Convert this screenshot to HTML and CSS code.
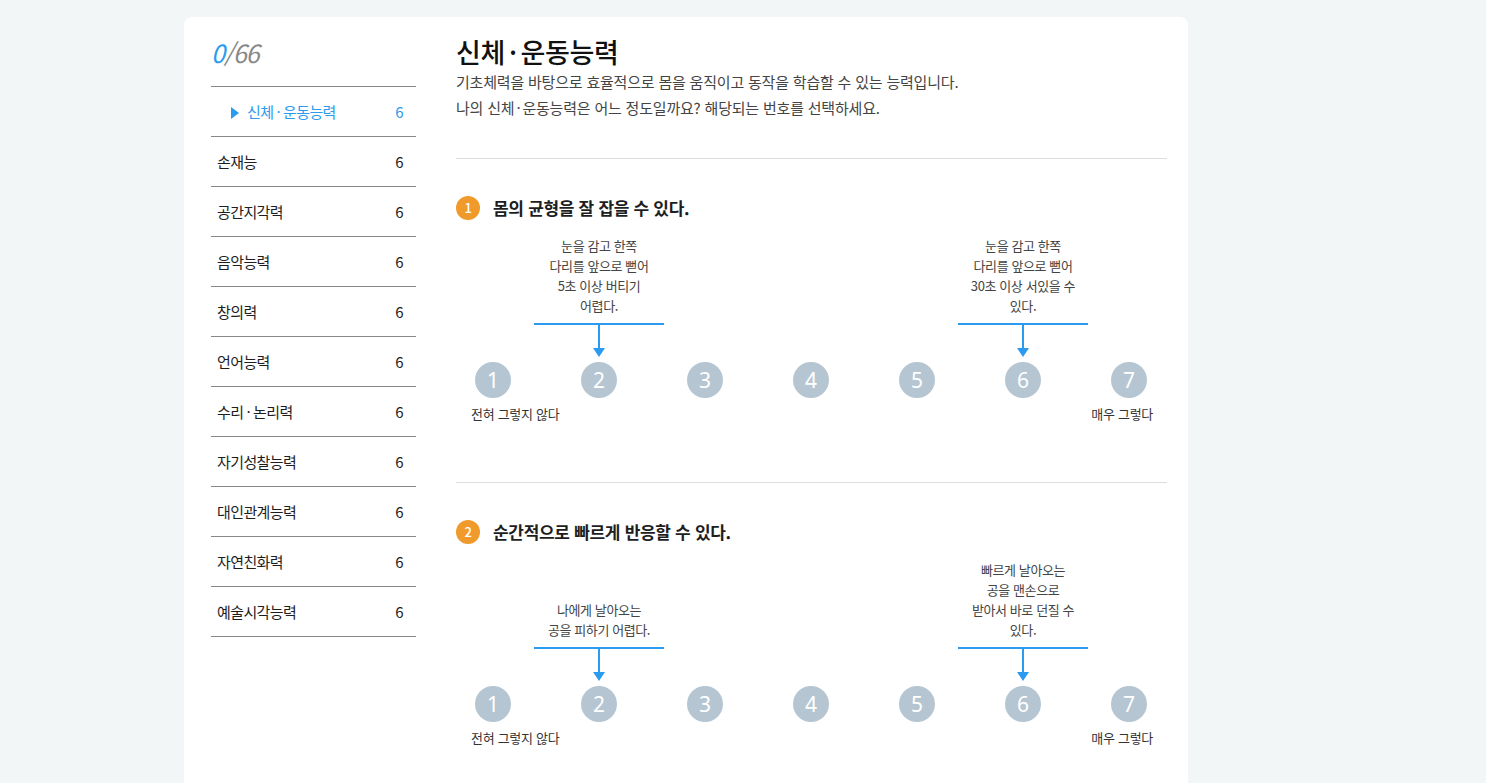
FILE: index.html
```html
<!DOCTYPE html>
<html lang="ko">
<head>
    <meta charset="utf-8">
    <link rel="stylesheet" href="styles.css">
</head>
<body>
    <div class="card">
        <aside class="sidebar">
            <div class="progress"><span class="done">0</span>/66</div>
            <ul class="menu">
                <li class="menu-item active"><span class="menu-name">신체<span class="dot">·</span>운동능력</span><span class="menu-count">6</span></li>
                <li class="menu-item"><span class="menu-name">손재능</span><span class="menu-count">6</span></li>
                <li class="menu-item"><span class="menu-name">공간지각력</span><span class="menu-count">6</span></li>
                <li class="menu-item"><span class="menu-name">음악능력</span><span class="menu-count">6</span></li>
                <li class="menu-item"><span class="menu-name">창의력</span><span class="menu-count">6</span></li>
                <li class="menu-item"><span class="menu-name">언어능력</span><span class="menu-count">6</span></li>
                <li class="menu-item"><span class="menu-name">수리<span class="dot">·</span>논리력</span><span class="menu-count">6</span></li>
                <li class="menu-item"><span class="menu-name">자기성찰능력</span><span class="menu-count">6</span></li>
                <li class="menu-item"><span class="menu-name">대인관계능력</span><span class="menu-count">6</span></li>
                <li class="menu-item"><span class="menu-name">자연친화력</span><span class="menu-count">6</span></li>
                <li class="menu-item"><span class="menu-name">예술시각능력</span><span class="menu-count">6</span></li>
            </ul>
        </aside>

        <main class="content">
            <header class="intro">
                <h1>신체<span class="dot">·</span>운동능력</h1>
                <p>기초체력을 바탕으로 효율적으로 몸을 움직이고 동작을 학습할 수 있는 능력입니다.</p>
                <p>나의 신체<span class="dot">·</span>운동능력은 어느 정도일까요? 해당되는 번호를 선택하세요.</p>
            </header>

            <section class="question">
                <h2 class="q-title"><span class="q-num">1</span>몸의 균형을 잘 잡을 수 있다.</h2>
                <div class="scale">
                    <div class="hints">
                        <div class="hint-cell"></div>
                        <div class="hint-cell">
                            <div class="hint">
                                <div class="hint-text">눈을 감고 한쪽<br>다리를 앞으로 뻗어<br>5초 이상 버티기<br>어렵다.</div>
                                <div class="hint-arrow"></div>
                            </div>
                        </div>
                        <div class="hint-cell"></div>
                        <div class="hint-cell"></div>
                        <div class="hint-cell"></div>
                        <div class="hint-cell">
                            <div class="hint">
                                <div class="hint-text">눈을 감고 한쪽<br>다리를 앞으로 뻗어<br>30초 이상 서있을 수<br>있다.</div>
                                <div class="hint-arrow"></div>
                            </div>
                        </div>
                        <div class="hint-cell"></div>
                    </div>
                    <div class="options">
                        <button class="opt">1</button>
                        <button class="opt">2</button>
                        <button class="opt">3</button>
                        <button class="opt">4</button>
                        <button class="opt">5</button>
                        <button class="opt">6</button>
                        <button class="opt">7</button>
                    </div>
                    <div class="ends"><span>전혀 그렇지 않다</span><span>매우 그렇다</span></div>
                </div>
            </section>

            <section class="question">
                <h2 class="q-title"><span class="q-num">2</span>순간적으로 빠르게 반응할 수 있다.</h2>
                <div class="scale">
                    <div class="hints">
                        <div class="hint-cell"></div>
                        <div class="hint-cell">
                            <div class="hint">
                                <div class="hint-text">나에게 날아오는<br>공을 피하기 어렵다.</div>
                                <div class="hint-arrow"></div>
                            </div>
                        </div>
                        <div class="hint-cell"></div>
                        <div class="hint-cell"></div>
                        <div class="hint-cell"></div>
                        <div class="hint-cell">
                            <div class="hint">
                                <div class="hint-text">빠르게 날아오는<br>공을 맨손으로<br>받아서 바로 던질 수<br>있다.</div>
                                <div class="hint-arrow"></div>
                            </div>
                        </div>
                        <div class="hint-cell"></div>
                    </div>
                    <div class="options">
                        <button class="opt">1</button>
                        <button class="opt">2</button>
                        <button class="opt">3</button>
                        <button class="opt">4</button>
                        <button class="opt">5</button>
                        <button class="opt">6</button>
                        <button class="opt">7</button>
                    </div>
                    <div class="ends"><span>전혀 그렇지 않다</span><span>매우 그렇다</span></div>
                </div>
            </section>
        </main>
    </div>
</body>
</html>
```

FILE: styles.css
```css
* {
    box-sizing: border-box;
    margin: 0;
    padding: 0;
}

body {
    font-family: "Noto Sans CJK KR", "Noto Sans", sans-serif;
    background-color: #f3f6f7;
    color: #1e1e1e;
    padding: 17px 0 0 184px;
}

.card {
    width: 1004px;
    background: white;
    border-radius: 8px;
    padding: 18px 21px 60px 27px;
    display: flex;
    gap: 40px;
}

.dot {
    margin: 0 3px;
}

/* sidebar */

.sidebar {
    width: 205px;
    flex-shrink: 0;
}

.progress {
    font-size: 25px;
    line-height: 34px;
    font-style: italic;
    color: #888;
    letter-spacing: -1px;
    margin-bottom: 17px;
}

.progress .done {
    color: #2b9bef;
}

.menu {
    list-style: none;
    border-top: 1px solid #888;
}

.menu-item {
    display: flex;
    align-items: center;
    justify-content: space-between;
    height: 50px;
    padding: 0 13px 0 6px;
    border-bottom: 1px solid #888;
    font-size: 15px;
    letter-spacing: -0.6px;
    cursor: pointer;
}

.menu-item.active {
    color: #2b9bef;
    padding-left: 20px;
}

.menu-item.active .menu-name::before {
    content: "";
    display: inline-block;
    border-top: 6px solid transparent;
    border-bottom: 6px solid transparent;
    border-left: 8px solid #2b9bef;
    margin-right: 8px;
    vertical-align: -1px;
}

/* content */

.content {
    flex: 1;
    min-width: 0;
}

.intro {
    padding-bottom: 37px;
    border-bottom: 1px solid #ddd;
}

.intro h1 {
    font-size: 27px;
    line-height: 34px;
    font-weight: 500;
    letter-spacing: -0.4px;
    color: #111;
}

.intro h1 .dot {
    margin: 0 4px;
}

.intro p {
    font-size: 15px;
    line-height: 26px;
    color: #444;
    letter-spacing: -0.2px;
}

.intro p .dot {
    margin: 0 2px;
}

.question {
    padding: 37px 0 58px;
    border-bottom: 1px solid #ddd;
}

.q-title {
    display: flex;
    align-items: center;
    gap: 13px;
    font-size: 17px;
    line-height: 24px;
    font-weight: 700;
    letter-spacing: -0.3px;
}

.q-num {
    width: 24px;
    height: 24px;
    border-radius: 50%;
    background: #ef9a2b;
    color: white;
    font-size: 13px;
    font-weight: 500;
    display: flex;
    align-items: center;
    justify-content: center;
}

.scale {
    margin: 16px -15px 0 -16px;
}

.hints,
.options {
    display: grid;
    grid-template-columns: repeat(7, 106px);
}

.hints {
    align-items: end;
}

.hint-cell {
    display: flex;
    justify-content: center;
}

.hint {
    width: 130px;
    flex-shrink: 0;
    display: flex;
    flex-direction: column;
    align-items: center;
}

.hint-text {
    width: 100%;
    text-align: center;
    font-size: 13px;
    line-height: 20px;
    color: #444;
    letter-spacing: -0.4px;
    padding-bottom: 7px;
    border-bottom: 2px solid #2b9bef;
}

.hint-arrow {
    width: 2px;
    height: 23px;
    background: #2b9bef;
    position: relative;
    margin-bottom: 9px;
}

.hint-arrow::after {
    content: "";
    position: absolute;
    left: -5px;
    top: 23px;
    border-left: 6px solid transparent;
    border-right: 6px solid transparent;
    border-top: 9px solid #2b9bef;
}

.options {
    margin-top: 5px;
}

.opt {
    justify-self: center;
    width: 36px;
    height: 36px;
    border: none;
    border-radius: 50%;
    background: #b5c6d2;
    color: white;
    font-family: "Noto Sans", sans-serif;
    font-size: 21px;
    cursor: pointer;
}

.ends {
    display: flex;
    justify-content: space-between;
    padding: 0 29px 0 31px;
    margin-top: 6px;
    font-size: 13px;
    line-height: 20px;
    color: #333;
    letter-spacing: -0.3px;
}
```
